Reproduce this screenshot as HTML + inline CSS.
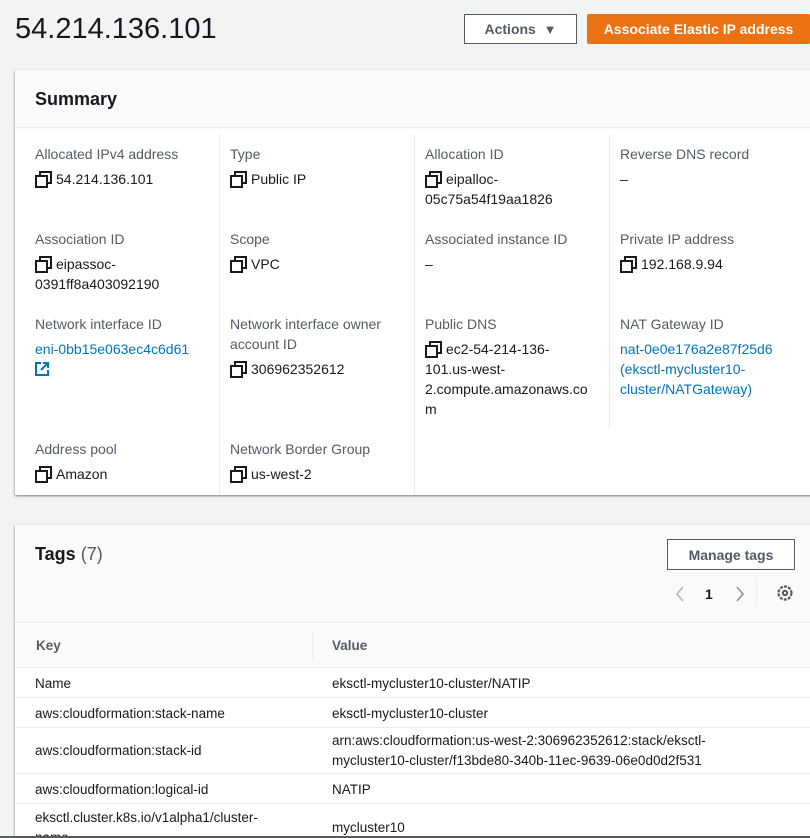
<!DOCTYPE html>
<html style="overflow:hidden;height:838px"><head><style>
*{box-sizing:border-box;margin:0;padding:0}
body{width:810px;height:838px;overflow:hidden;background:#f2f3f3;font-family:"Liberation Sans",sans-serif;color:#16191f;position:relative}
.a{position:absolute}
h1{position:absolute;left:15px;top:13px;font-size:29px;font-weight:400;color:#16191f}
.btn{position:absolute;height:30px;font-weight:700;font-size:14px;display:flex;align-items:center;justify-content:center}
.card{position:absolute;background:#fff;box-shadow:0 1px 2px 0 rgba(0,28,36,.3),1px 1px 2px 0 rgba(0,28,36,.15),-1px 1px 2px 0 rgba(0,28,36,.15)}
.lbl{font-size:14px;color:#545b64;line-height:20px}
.val{font-size:14px;color:#16191f;line-height:20px}
.lnk{color:#0073bb}
.cp{display:inline-block;width:14px;height:14px;position:relative;vertical-align:-1px;margin-right:7px}
.cp:before{content:"";position:absolute;left:4px;top:0;width:9px;height:9px;border:2px solid #16191f}
.cp:after{content:"";position:absolute;left:0;top:4px;width:9px;height:9px;border:2px solid #16191f;background:#fff}
.vl{position:absolute;width:1px;background:#eaeded;top:134px;height:361px}
.row{position:absolute;left:15px;right:0;border-top:1px solid #eaeded;font-size:13.5px;color:#16191f}
.row span{position:absolute;line-height:20px}
</style></head><body>
<h1>54.214.136.101</h1>
<div class="btn" style="left:464px;top:14px;width:113px;border:1px solid #545b64;background:#fff;color:#545b64">Actions&nbsp;&nbsp;<span style="font-size:13px">▼</span></div>
<div class="btn" style="left:587px;top:14px;width:223px;background:#ec7211;color:#fff;border-radius:2px">Associate Elastic IP address</div>

<div class="card" style="left:15px;top:70px;width:800px;height:425px;background:#fafafa">
  <div style="height:58px;border-bottom:1px solid #eaeded;padding:19px 20px;font-size:18px;font-weight:700">Summary</div>
  <div style="position:absolute;top:59px;left:0;right:0;bottom:0;background:#fff"></div>
</div>
<div class="vl" style="left:219px"></div>
<div class="vl" style="left:414px"></div>
<div class="vl" style="left:609px;height:295px"></div>

<div class="a" style="left:35px;top:144px"><div class="lbl">Allocated IPv4 address</div><div class="val" style="margin-top:5px"><i class="cp"></i>54.214.136.101</div></div>
<div class="a" style="left:230px;top:144px"><div class="lbl">Type</div><div class="val" style="margin-top:5px"><i class="cp"></i>Public IP</div></div>
<div class="a" style="left:425px;top:144px"><div class="lbl">Allocation ID</div><div class="val" style="margin-top:5px"><i class="cp"></i>eipalloc-<br>05c75a54f19aa1826</div></div>
<div class="a" style="left:620px;top:144px"><div class="lbl">Reverse DNS record</div><div class="val" style="margin-top:5px">–</div></div>

<div class="a" style="left:35px;top:229px"><div class="lbl">Association ID</div><div class="val" style="margin-top:5px"><i class="cp"></i>eipassoc-<br>0391ff8a403092190</div></div>
<div class="a" style="left:230px;top:229px"><div class="lbl">Scope</div><div class="val" style="margin-top:5px"><i class="cp"></i>VPC</div></div>
<div class="a" style="left:425px;top:229px"><div class="lbl">Associated instance ID</div><div class="val" style="margin-top:5px">–</div></div>
<div class="a" style="left:620px;top:229px"><div class="lbl">Private IP address</div><div class="val" style="margin-top:5px"><i class="cp"></i>192.168.9.94</div></div>

<div class="a" style="left:35px;top:314px"><div class="lbl">Network interface ID</div><div class="val lnk" style="margin-top:5px">eni-0bb15e063ec4c6d61<br><svg width="14" height="14" viewBox="0 0 14 14" style="vertical-align:-2px"><path d="M6 1H1v12h12V8" fill="none" stroke="#0073bb" stroke-width="2"/><path d="M8 1h5v5M13 1L6 8" fill="none" stroke="#0073bb" stroke-width="2"/></svg></div></div>
<div class="a" style="left:230px;top:314px"><div class="lbl">Network interface owner<br>account ID</div><div class="val" style="margin-top:5px"><i class="cp"></i>306962352612</div></div>
<div class="a" style="left:425px;top:314px"><div class="lbl">Public DNS</div><div class="val" style="margin-top:5px"><i class="cp"></i>ec2-54-214-136-<br>101.us-west-<br>2.compute.amazonaws.co<br>m</div></div>
<div class="a" style="left:620px;top:314px"><div class="lbl">NAT Gateway ID</div><div class="val lnk" style="margin-top:5px">nat-0e0e176a2e87f25d6<br>(eksctl-mycluster10-<br>cluster/NATGateway)</div></div>

<div class="a" style="left:35px;top:439px"><div class="lbl">Address pool</div><div class="val" style="margin-top:5px"><i class="cp"></i>Amazon</div></div>
<div class="a" style="left:230px;top:439px"><div class="lbl">Network Border Group</div><div class="val" style="margin-top:5px"><i class="cp"></i>us-west-2</div></div>

<div class="card" style="left:15px;top:525px;width:800px;height:320px;background:#fafafa">
  <div class="a" style="left:20px;top:19px;font-size:18px"><b>Tags</b> <span style="color:#545b64">(7)</span></div>
  <div class="btn" style="left:652px;top:14px;width:128px;height:31px;border:1px solid #545b64;background:#fff;color:#545b64">Manage tags</div>
  <svg class="a" style="left:659px;top:61px" width="12" height="16" viewBox="0 0 12 16"><path d="M9 1L3 8l6 7" fill="none" stroke="#aab7b8" stroke-width="1.6"/></svg>
  <div class="a" style="left:690px;top:61px;font-size:14px;font-weight:700">1</div>
  <svg class="a" style="left:719px;top:61px" width="12" height="16" viewBox="0 0 12 16"><path d="M3 1l6 7-6 7" fill="none" stroke="#879596" stroke-width="1.6"/></svg>
  <div class="a" style="left:741px;top:52px;width:1px;height:30px;background:#eaeded"></div>
  <svg class="a" style="left:761px;top:59px" width="18" height="18" viewBox="0 0 18 18"><circle cx="9" cy="9" r="6.5" fill="none" stroke="#545b64" stroke-width="2.2" stroke-dasharray="3 1.2"/><circle cx="9" cy="9" r="2.2" fill="none" stroke="#545b64" stroke-width="2"/></svg>
</div>
<div class="row" style="top:622px;height:46px;background:#fafafa"><span style="left:21px;top:13px;font-weight:700;color:#545b64">Key</span><span style="left:297px;top:9px;width:1px;height:28px;background:#eaeded"></span><span style="left:317px;top:13px;font-weight:700;color:#545b64">Value</span></div>
<div class="row" style="top:667px;height:30px;background:#fff"><span style="left:20px;top:6px">Name</span><span style="left:317px;top:6px">eksctl-mycluster10-cluster/NATIP</span></div>
<div class="row" style="top:697px;height:30px;background:#fff"><span style="left:20px;top:6px">aws:cloudformation:stack-name</span><span style="left:317px;top:6px">eksctl-mycluster10-cluster</span></div>
<div class="row" style="top:727px;height:46px;background:#fff"><span style="left:20px;top:13px">aws:cloudformation:stack-id</span><span style="left:317px;top:3px">arn:aws:cloudformation:us-west-2:306962352612:stack/eksctl-<br>mycluster10-cluster/f13bde80-340b-11ec-9639-06e0d0d2f531</span></div>
<div class="row" style="top:773px;height:30px;background:#fff"><span style="left:20px;top:6px">aws:cloudformation:logical-id</span><span style="left:317px;top:6px">NATIP</span></div>
<div class="row" style="top:803px;height:35px;background:#fff;overflow:hidden"><span style="left:20px;top:4px">eksctl.cluster.k8s.io/v1alpha1/cluster-<br>name</span><span style="left:317px;top:14px">mycluster10</span></div>
<div class="a" style="left:0;top:836px;width:810px;height:2px;background:#545b64"></div>
</body></html>
